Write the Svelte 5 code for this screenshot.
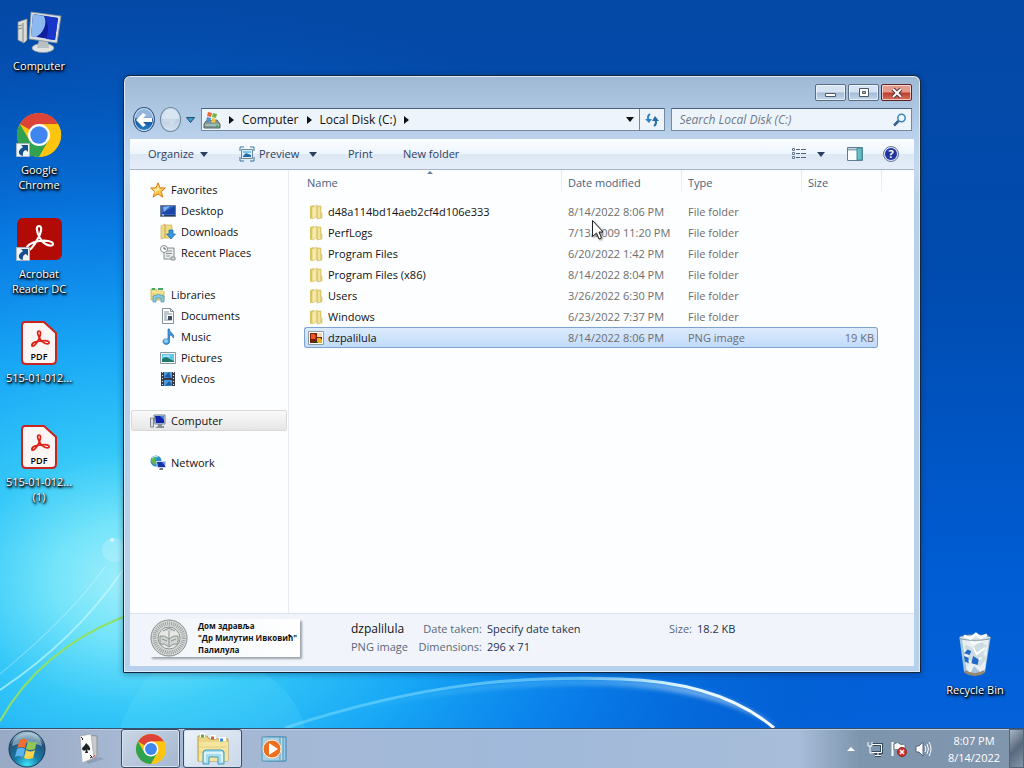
<script>
	let search = '';
	let selected = 'dzpalilula';

	const shortcuts = [
		{ icon: 'computer', label: 'Computer' },
		{ icon: 'chrome', label: 'Google Chrome', link: true },
		{ icon: 'acrobat', label: 'Acrobat Reader DC', link: true },
		{ icon: 'pdf', label: '515-01-012...' },
		{ icon: 'pdf', label: '515-01-012... (1)' }
	];

	const groups = [
		{
			icon: 'star',
			label: 'Favorites',
			items: [
				{ icon: 'desktop', label: 'Desktop' },
				{ icon: 'downloads', label: 'Downloads' },
				{ icon: 'recent', label: 'Recent Places' }
			]
		},
		{
			icon: 'libraries',
			label: 'Libraries',
			items: [
				{ icon: 'documents', label: 'Documents' },
				{ icon: 'music', label: 'Music' },
				{ icon: 'pictures', label: 'Pictures' },
				{ icon: 'videos', label: 'Videos' }
			]
		},
		{ icon: 'pc', label: 'Computer', active: true, items: [] },
		{ icon: 'network', label: 'Network', items: [] }
	];

	const files = [
		{ name: 'd48a114bd14aeb2cf4d106e333', date: '8/14/2022 8:06 PM', type: 'File folder', size: '' },
		{ name: 'PerfLogs', date: '7/13/2009 11:20 PM', type: 'File folder', size: '' },
		{ name: 'Program Files', date: '6/20/2022 1:42 PM', type: 'File folder', size: '' },
		{ name: 'Program Files (x86)', date: '8/14/2022 8:04 PM', type: 'File folder', size: '' },
		{ name: 'Users', date: '3/26/2022 6:30 PM', type: 'File folder', size: '' },
		{ name: 'Windows', date: '6/23/2022 7:37 PM', type: 'File folder', size: '' },
		{ name: 'dzpalilula', date: '8/14/2022 8:06 PM', type: 'PNG image', size: '19 KB' }
	];
</script>

{#snippet chrome()}
	<svg class="chrome" viewBox="0 0 48 48" aria-hidden="true">
		<circle cx="24" cy="24" r="24" fill="#fdc50f" />
		<path d="M24 24 3.2 12A24 24 0 0 1 44.8 12H24Z" fill="#dd4336" />
		<path d="M3.2 12A24 24 0 0 0 24 48L34.4 30 24 24 13.6 30Z" fill="#2fa14f" />
		<path d="M44.8 12H24L34.4 30 24 48A24 24 0 0 0 44.8 12Z" fill="#fdc50f" />
		<circle cx="24" cy="24" r="12" fill="#fff" />
		<circle cx="24" cy="24" r="9.5" fill="#3f86ee" />
	</svg>
{/snippet}

{#snippet down()}
	<svg class="tri" viewBox="0 0 8 5" aria-hidden="true"><path d="M0 0h8L4 5Z" fill="currentColor" /></svg>
{/snippet}

{#snippet right()}
	<svg class="tri-right" viewBox="0 0 5 8" aria-hidden="true"><path d="M0 0v8l5-4Z" fill="#111" /></svg>
{/snippet}

{#snippet bigIcon(name)}
	{#if name === 'computer'}
		<svg class="big" viewBox="0 0 44 44" aria-hidden="true">
			<path d="m1 13 9-3v21l-3 3-6-3Z" fill="#d9dcda" stroke="#8d9692" stroke-width=".7" />
			<path d="M6 14v19M1 17l4-1M1 20l4-1" stroke="#7d8581" />
			<ellipse cx="26" cy="39" rx="11" ry="4.500" fill="#dfe3e2" stroke="#8e9898" stroke-width=".7" />
			<path d="m22 31 9 1 1 7H20Z" fill="#b9c1c2" />
			<path d="m14 3 30 4-4 27-28-4Z" fill="#d8dee0" stroke="#7d8b97" stroke-width=".8" />
			<path d="m16 5 25 4-3 22-24-4Z" fill="#101f9b" />
			<path d="m16 5 11 2c4 8-1 17-8 21l-5-1Z" fill="#8cbaf0" />
			<path d="m27 7 14 2-3 22-9-1c3-7 3-15-2-23Z" fill="#1735c8" />
		</svg>
	{:else if name === 'chrome'}
		{@render chrome()}
	{:else if name === 'acrobat'}
		<svg class="big" viewBox="0 0 44 44" aria-hidden="true">
			<rect y="1" width="45" height="42" rx="6" fill="#b20b05" />
			<path d="M10 33c-2-4 5-8 12-9 6-1 14 0 14 3s-9 2-13-6c-4-7-4-12-1-12 4 0 2 8-2 14-3 6-8 12-10 10Z" fill="none" stroke="#fff" stroke-width="2.200" />
		</svg>
	{:else if name === 'pdf'}
		<svg class="big" viewBox="0 0 44 44" aria-hidden="true">
			<path d="M8 1h19l12 11v27q0 4-4 4H9q-4 0-4-4V5q0-4 3-4Z" fill="#fbf5f3" stroke="#ca2420" stroke-width="2" />
			<path d="M15 25c-1-3 4-5 9-5 4-1 9 0 8 2s-7 0-9-4c-3-5-3-8-1-8 3 0 1 6-1 10-2 3-4 6-6 5Z" fill="none" stroke="#df2018" stroke-width="1.700" />
			<text x="22" y="39" text-anchor="middle" class="pdf-text">PDF</text>
		</svg>
	{:else}
		<svg class="big bin" viewBox="0 0 44 48" aria-hidden="true">
			<path d="m5 5 5 37q12 8 23 0l6-37Z" fill="#b9cfdd" opacity=".9" />
			<path d="m8 8 5 32 4 4 4-8 8 8 4-5 4-31-10-4-9 2-8-2Z" fill="#e9f0f2" />
			<path d="m11 12 9 5 6-9 9 6-4 9 4 5-8 9-5-8-9 7 2-12-4-7Z" fill="#cbdce3" />
			<path d="m20 16 4 7 9-7M12 28l7 5 10-6M17 9l4 3 8-3" fill="none" stroke="#fff" stroke-width="2" />
			<ellipse cx="22" cy="5" rx="17" ry="3" fill="#d9e5e9" stroke="#8195a3" />
			<path d="m10 3 7 3 6-5 5 4 7-3" fill="none" stroke="#fff" stroke-width="3" />
			<path d="m10 22 4-4 4 2-2 4Zm8 11 2-8 6 4-1 6Zm-7-2-1-6 5 2v6Z" fill="#2469c6" />
			<path d="M11 42q11 7 21 0" fill="none" stroke="#97866d" stroke-width="3" />
		</svg>
	{/if}
{/snippet}

{#snippet icon(name)}
	<svg class="small" viewBox="0 0 16 16" aria-hidden="true">
		{#if name === 'star'}
			<path d="m8 .8 2 5 5.300.2-4 3.600 1.500 5.500L8 12l-4.800 3.100L4.700 9.600.7 6 6 5.800Z" fill="#ffc54b" stroke="#d97b16" />
			<path d="m8 3 1 4 3 .5-5 1.500-3 3 1-3-2-2 4-.5Z" fill="#ffed9c" />
		{:else if name === 'desktop'}
			<path d="M.5 2.500h15v11H.5Z" fill="#3268c6" stroke="#6d7c8e" />
			<path d="m1 11 5-3 9-5v8H1Z" fill="#1b45a5" /><path d="m3 4 7-1-6 6Z" fill="#7eb1ed" />
			<path d="M1 12.500h14" stroke="#263a5c" /><path d="M2 12h2" stroke="#fff" />
		{:else if name === 'downloads'}
			<path d="m1 2 4-2v14l-4 1Zm4-1h7v13H5Z" fill="#eddb86" stroke="#caaa43" stroke-width=".6" />
			<path d="M9 6h4v4h2.500L11 15 6.500 10H9Z" fill="#3696df" stroke="#1767a6" stroke-width=".7" />
		{:else if name === 'recent'}
			<path d="M5 3h9v11H4V8" fill="#eceeed" stroke="#828b8b" />
			<path d="M6 6h6M6 8.500h6M6 11h4M11 12h4v3h-4Z" stroke="#8a9393" fill="#ced4d4" />
			<circle cx="4" cy="4" r="3.500" fill="#fff" stroke="#8b9191" /><path d="M4 2v2h2" stroke="#555" fill="none" />
		{:else if name === 'libraries'}
			<path d="M1 2h5l1 2h7v9H1Z" fill="#edd978" stroke="#c4a640" stroke-width=".7" />
			<path d="M2 2h3M8 2h5" stroke="#49a768" stroke-width="2" /><path d="M2 5h12" stroke="#fff3b0" />
			<path d="M3 15V9q5-3 11 0v6h-3v-4H6v4Z" fill="#86cbe5" stroke="#4196bb" stroke-width=".7" />
		{:else if name === 'documents'}
			<path d="M2.500.5h8l3 3v12h-11Z" fill="#fff" stroke="#849097" />
			<path d="M10.500.5v3h3M4 4h5M4 6h8M4 8h3M4 10h3M4 12h8" fill="none" stroke="#7e8d98" /><path d="M8 8h4v4H8Z" fill="#3b4b63" />
		{:else if name === 'music'}
			<path d="M8 0h1.500c0 4 5 4 4 9-1-2-3-3-4-3v7c0 2-3 3-5 2s-2-4 0-5H8Z" fill="#4398d7" stroke="#2367a6" stroke-width=".7" />
			<circle cx="6" cy="12" r="2" fill="#88cff3" />
		{:else if name === 'pictures'}
			<path d="M.5 2.500h15v11H.5Z" fill="#f2f6f7" stroke="#89969d" />
			<path d="M2 4h12v8H2Z" fill="#63c4e6" /><path d="m2 9 4-2 8 4v1H2Z" fill="#20776b" /><path d="M3 6h7" stroke="#dffbff" />
		{:else if name === 'videos'}
			<path d="M1 1h14v14H1Z" fill="#353a45" /><path d="M4 1h8v6H4Zm0 8h8v6H4Z" fill="#4b9cda" />
			<path d="m4 6 5-5 2 6Zm1 9 4-5 3 4Z" fill="#225aa0" />
			<path d="M2.500 1v14M13.500 1v14" stroke="#eee" stroke-dasharray="1 2" />
		{:else if name === 'pc'}
			<path d="M.5 5h3v9h-3Z" fill="#d9dddf" stroke="#7e8990" /><path d="M4 2h11v9H5Z" fill="#cdd9e6" stroke="#6f7f98" />
			<path d="M5 3h9v7H6Z" fill="#1322ab" /><path d="M10 3h4v4Z" fill="#4b83e0" /><path d="M8 11h4v2h2v2H5l3-2Z" fill="#858f98" />
		{:else if name === 'network'}
			<circle cx="6" cy="6" r="5.500" fill="#268ed1" /><path d="m2 3 5-1-2 4 2 3-3 1-3-4Z" fill="#69b74b" /><path d="M2 3q3-3 6-1" stroke="#c8f3ff" fill="none" />
			<path d="M6 6h10v7H7Z" fill="#cad7e5" /><path d="M7 7h8v5H8Z" fill="#1633aa" /><path d="M12 7h3v4Z" fill="#5b94e8" /><path d="M10 13h3v2H9Z" fill="#707c88" />
		{:else if name === 'folder'}
			<path d="m2 2 4-1v13l-4 1Z" fill="#d9c663" /><path d="m4 3 5-2v12l-5 2Z" fill="#f3e5a0" stroke="#d5bd63" stroke-width=".5" />
			<path d="M9 2h4v6l1 1v5l-5 1Z" fill="#e4d17b" stroke="#c9b44f" stroke-width=".5" /><path d="M6 4v9M11 3v11" stroke="#fff4bc" />
		{:else if name === 'image'}
			<path d="M.5 1.500h15v13H.5Z" fill="#fff" stroke="#949b9d" /><path d="M2 3h12v10H2Z" fill="#7a2010" />
			<path d="M3 4h3q3 1 1 5H3Z" fill="#f2591b" /><path d="M9 8q4-1 5 2v3H9Z" fill="#efac20" /><path d="m7 9 3 4H6Z" fill="#244716" /><path d="M9 3h5v4H9Z" fill="#f3d9a8" />
		{/if}
	</svg>
{/snippet}

<div class="desktop">
	<svg class="wallpaper" viewBox="0 0 1024 768" preserveAspectRatio="none" aria-hidden="true">
		<defs>
			<linearGradient id="sky" x2="0" y2="1">
				<stop offset="0" stop-color="#0549a6" /><stop offset=".35" stop-color="#004bae" />
				<stop offset=".75" stop-color="#005dd4" /><stop offset="1" stop-color="#0562da" />
			</linearGradient>
			<radialGradient id="glow" cx="0" cy="0" r="1" gradientUnits="userSpaceOnUse" gradientTransform="translate(130 580) scale(760 580)">
				<stop offset="0" stop-color="#a1effa" /><stop offset=".1" stop-color="#74e4fa" />
				<stop offset=".22" stop-color="#35c8f8" /><stop offset=".4" stop-color="#18a8f6" />
				<stop offset=".62" stop-color="#0a84ee" stop-opacity=".8" /><stop offset="1" stop-color="#0059c5" stop-opacity="0" />
			</radialGradient>
			<linearGradient id="arc" x1="270" x2="778" y1="0" y2="0" gradientUnits="userSpaceOnUse">
				<stop offset="0" stop-color="#8ee5ff" stop-opacity=".4" /><stop offset=".6" stop-color="#8fe0ff" stop-opacity=".6" />
				<stop offset=".8" stop-color="#d8f4ff" /><stop offset="1" stop-color="#fff" />
			</linearGradient>
			<filter id="haze"><feGaussianBlur stdDeviation="2" /></filter>
		</defs>
		<path d="M0 0h1024v768H0Z" fill="url(#sky)" />
		<path d="M0 0h1024v768H0Z" fill="url(#glow)" />
		<path d="M120 728q35-95 110-70 62 20 75 70Z" fill="#80f5ff" opacity=".12" />
		<path d="M270 728C420 690 520 676 610 679q110 2 168 49-62-38-168-42-160-4-340 42" fill="url(#arc)" opacity=".45" filter="url(#haze)" />
		<path d="M285 728C430 680 530 676 620 679q100 3 154 49" fill="none" stroke="url(#arc)" stroke-width="3" />
		<path d="M0 690Q75 640 123 570" fill="none" stroke="#c7faff" stroke-width="2" opacity=".65" />
		<path d="M0 674Q70 616 105 567" fill="none" stroke="#fff" opacity=".4" />
		<path d="M0 721q40-71 123-104" fill="none" stroke="#8fe06a" stroke-width="2" />
		<circle cx="114" cy="550" r="12" fill="#fff" opacity=".18" /><circle cx="112" cy="540" r="2" fill="#fff" opacity=".6" />
	</svg>

	<main class="workspace">
		<div class="shortcuts">
			{#each shortcuts as item}
				<button class="shortcut">
					<span class="picture">
						{@render bigIcon(item.icon)}
						{#if item.link}
							<svg class="arrow" viewBox="0 0 14 14" aria-hidden="true">
								<path d="M.5.5h13v13H.5Z" fill="#eef3f7" stroke="#a9b7c2" />
								<path d="M5 2h7v7l-2-2q-4 1-3 6-5-1-4-5 1-2 4-4Z" fill="#174f8b" />
							</svg>
						{/if}
					</span>
					<span class="caption">{item.label}</span>
				</button>
			{/each}
		</div>

		<section class="window" aria-label="Local Disk (C:)">
			<header class="titlebar">
				<button class="caption-button" aria-label="Minimize">
					<svg viewBox="0 0 14 10"><path d="M1.500 5.500h10v3h-10Z" fill="#fff" stroke="#4c5664" /></svg>
				</button>
				<button class="caption-button" aria-label="Maximize">
					<svg viewBox="0 0 14 10"><path d="M2.500.5h9v8h-9Z" fill="#fff" stroke="#4c5664" /><path d="M5.500 3.500h3v2h-3Z" fill="#b7c9df" stroke="#4c5664" /></svg>
				</button>
				<button class="caption-button close" aria-label="Close">
					<svg viewBox="0 0 14 10"><path d="m3 1 8 8m0-8L3 9" stroke="#553439" stroke-width="4" /><path d="m3 1 8 8m0-8L3 9" stroke="#fff" stroke-width="2" /></svg>
				</button>
			</header>

			<div class="navigation">
				<div class="history">
					<button class="round back" aria-label="Back">
						<svg viewBox="0 0 18 18"><path d="m8 2 3 2-3 3h9v4H8l3 3-3 2-7-7Z" fill="#fff" /></svg>
					</button>
					<button class="round forward" aria-label="Forward">
						<svg viewBox="0 0 18 18"><path d="m10 3-2 2 2 2H2v4h8l-2 2 2 2 6-6Z" fill="#dce7f2" opacity=".5" /></svg>
					</button>
					<button class="recent" aria-label="Recent pages">
						<svg viewBox="0 0 9 6"><path d="M.5.5h8l-4 5Z" fill="#3b9dcd" stroke="#234a70" /></svg>
					</button>
				</div>
				<nav class="address" aria-label="Address">
					<svg class="drive" viewBox="0 0 18 18" aria-hidden="true">
						<path d="m3 10 11-1 3 4v4H1v-4Z" fill="#819897" stroke="#546965" />
						<path d="M2 14h14" stroke="#c4dcda" /><path d="M13 15h2" stroke="#43b44c" stroke-width="2" />
						<path d="m5 1 4 1-1 4-4-1Z" fill="#e86838" /><path d="m10 2 4 1-1 4-4-1Z" fill="#75b747" />
						<path d="m4 6 4 1-1 4-4-1Z" fill="#4a95d5" /><path d="m9 7 4 1-1 4-4-1Z" fill="#f2c141" />
					</svg>
					{@render right()}
					<button class="crumb">Computer</button>
					{@render right()}
					<button class="crumb">Local Disk (C:)</button>
					{@render right()}
					<button class="history-button" aria-label="Previous locations">{@render down()}</button>
					<button class="refresh" aria-label="Refresh">
						<svg viewBox="0 0 16 16"><path d="M6 2q-3 2-1.500 6" fill="none" stroke="#3383c4" stroke-width="2" /><path d="M1 7h7l-3 4Z" fill="#3383c4" /><path d="M10 14q3-2 1.500-6" fill="none" stroke="#246da9" stroke-width="2" /><path d="M8 9h7l-4-5Z" fill="#246da9" /></svg>
					</button>
				</nav>
				<label class="search">
					<input type="text" bind:value={search} placeholder="Search Local Disk (C:)" aria-label="Search Local Disk (C:)" />
					<svg viewBox="0 0 14 14" aria-hidden="true"><circle cx="8.500" cy="5" r="3.700" fill="#e8f8ff" stroke="#4283b5" stroke-width="1.500" /><path d="M5.500 8 1 12.500" stroke="#315f92" stroke-width="2.500" /></svg>
				</label>
			</div>

			<div class="toolbar">
				<button class="organize">Organize {@render down()}</button>
				<button class="preview">
					<svg class="small" viewBox="0 0 16 16" aria-hidden="true"><path d="M1 5V1h4m6 0h4v4M1 11v4h4m6 0h4v-4" fill="none" stroke="#35779d" /><path d="M2.500 3.500h11v9h-11Z" fill="#dceffa" stroke="#718793" /><path d="m4 10 3-3 5 2v2H4Z" fill="#236ba7" /><path d="M4 5h8v2H4Z" fill="#7bc7eb" /></svg>
					Preview
				</button>
				<button class="preview-menu" aria-label="Preview options">{@render down()}</button>
				<button class="print">Print</button>
				<button class="new-folder">New folder</button>
				<div class="tools">
					<button class="view" aria-label="Change your view">
						<svg class="small" viewBox="0 0 16 14"><path d="M1.500 1.500h2v2h-2Zm0 4h2v2h-2Zm0 4h2v2h-2Z" fill="#fff" stroke="#65758b" /><path d="M5 2.500h4m1 0h5M5 6.500h4m1 0h5M5 10.500h4m1 0h5" stroke="#52627a" /></svg>
						{@render down()}
					</button>
					<button aria-label="Show the preview pane">
						<svg class="small" viewBox="0 0 16 14"><path d="M.5.500h15v13H.5Z" fill="#fbfdfe" stroke="#627d91" /><path d="M1 2.500h9" stroke="#8baab9" stroke-width="2" /><path d="M10 1h5v12h-5Z" fill="#64bec2" stroke="#3c8c9d" /></svg>
					</button>
					<button aria-label="Get help">
						<svg class="small" viewBox="0 0 16 16"><circle cx="8" cy="8" r="7.500" fill="#dbe6f5" stroke="#6878a5" /><circle cx="8" cy="8" r="6" fill="#25349c" /><text x="8" y="12" class="help-text" text-anchor="middle">?</text></svg>
					</button>
				</div>
			</div>

			<div class="content">
				<nav class="sidebar" aria-label="Folders">
					{#each groups as group}
						<div class="group">
							<button class="place" class:active={group.active}>{@render icon(group.icon)}{group.label}</button>
							{#each group.items as item}
								<button class="place child">{@render icon(item.icon)}{item.label}</button>
							{/each}
						</div>
					{/each}
				</nav>
				<div class="listing">
					<table>
						<thead>
							<tr>
								<th class="name">Name<svg class="sorted" viewBox="0 0 8 4" aria-hidden="true"><path d="m0 4 4-4 4 4Z" fill="#66809a" /></svg></th>
								<th class="date">Date modified</th>
								<th class="type">Type</th>
								<th class="size">Size</th>
								<th class="end"></th>
							</tr>
						</thead>
						<tbody>
							{#each files as file}
								<tr class:selected={file.name === selected} onclick={() => (selected = file.name)}>
									<td class="name"><span>{@render icon(file.size ? 'image' : 'folder')}{file.name}</span></td>
									<td>{file.date}</td>
									<td>{file.type}</td>
									<td class="size">{file.size}</td>
								</tr>
							{/each}
						</tbody>
					</table>
				</div>
			</div>

			<footer class="details">
				<div class="thumbnail">
					<svg viewBox="0 0 38 38" aria-hidden="true">
						<circle cx="19" cy="19" r="18" fill="#d8dcda" stroke="#868d8a" />
						<circle cx="19" cy="19" r="14.500" fill="none" stroke="#9ba29e" stroke-width="4" stroke-dasharray="1 1" />
						<circle cx="19" cy="19" r="11" fill="#e6e8e6" stroke="#8b9390" />
						<path d="M10 17q5-1 9 3 4-4 9-3v8q-5-1-9 3-4-4-9-3Zm3-5 6-3 6 3m-6 0v15M12 20l5 2m4 0 5-2" fill="#d0d5d2" stroke="#8b9390" />
					</svg>
					<p>Дом здравља<br />"Др Милутин Ивковић"<br />Палилула</p>
				</div>
				<dl>
					<dt class="file-name">dzpalilula</dt>
					<dt>Date taken:</dt><dd>Specify date taken</dd>
					<dt>Size:</dt><dd>18.2 KB</dd>
					<dt class="file-type">PNG image</dt>
					<dt>Dimensions:</dt><dd>296 x 71</dd>
				</dl>
			</footer>
		</section>

		<button class="shortcut recycle">
			<span class="picture">{@render bigIcon('bin')}</span>
			<span class="caption">Recycle Bin</span>
		</button>

		<svg class="cursor" viewBox="0 0 12 20" aria-hidden="true"><path d="M.5.500v16l4-3.500 2.500 6 2.500-1-2.500-6H11Z" fill="#fff" stroke="#222" /></svg>
	</main>

	<footer class="taskbar">
		<button class="start" aria-label="Start">
			<svg viewBox="0 0 38 38">
				<defs><radialGradient id="orb" cx=".5" cy=".95" r=".9"><stop offset="0" stop-color="#3de5f8" /><stop offset=".4" stop-color="#1878a5" /><stop offset=".8" stop-color="#255478" /><stop offset="1" stop-color="#9ebac9" /></radialGradient></defs>
				<circle cx="19" cy="19" r="18" fill="url(#orb)" stroke="#153a58" />
				<path d="M4 16Q6 4 19 3t15 13Q19 9 4 16Z" fill="#c8dfeb" opacity=".5" />
				<path d="M12 10q4-3 7 0l-2 8q-4-2-8 0Z" fill="#ef6d30" /><path d="M20 11q5 3 9 0l-2 8q-5 2-9 0Z" fill="#94c653" />
				<path d="M9 19q4-3 8 0l-2 8q-4-2-8 0Z" fill="#5bb3ef" /><path d="M18 20q4 3 9 0l-2 8q-5 2-9 0Z" fill="#ffd44d" />
			</svg>
		</button>
		<button class="task" aria-label="Solitaire">
			<svg viewBox="0 0 34 34"><path d="m12 28 16-3 4 2-15 5Z" fill="#63748b" opacity=".3" /><path d="m12 3 13 1v20l-9 6Z" fill="#c9c9cb" stroke="#777e89" stroke-width=".7" /><path d="m8 4 11-2 3 24-12 5Z" fill="#fafafa" stroke="#9ca3aa" stroke-width=".7" /><path d="M14 11q5 4 4 7-2 1-3-1l1 4h-3l1-3q-3 2-4-1c0-2 3-3 4-6Z" fill="#202426" /><path d="m9 5 2 2-1 1m8 15 2 2-2 1" fill="none" stroke="#222" /><path d="m20 26 3-3" stroke="#b55" /></svg>
		</button>
		<button class="task running" aria-label="Google Chrome">{@render chrome()}</button>
		<button class="task running front" aria-label="Windows Explorer">
			<svg viewBox="0 0 34 34"><path d="M2 4h9l2 3h19v22H2Z" fill="#ead684" stroke="#b99e48" /><path d="M4 3h5m5 2h6m3 2h7" stroke="#fff" stroke-width="4" /><path d="M5 4h3" stroke="#49ad53" stroke-width="3" /><path d="M15 6h3" stroke="#d7593c" stroke-width="3" /><path d="M24 8h3" stroke="#3c8bd7" stroke-width="3" /><path d="M3 10h29v19H3Z" fill="#f4e69e" /><path d="M3 15h28m-28 5h28" stroke="#e4cf7e" /><path d="M7 32V21q0-3 3-3h15q3 0 3 3v11h-6v-7h-9v7Z" fill="#a9dced" stroke="#439cbd" /><path d="M9 30v-9h17v9" fill="none" stroke="#e3fbff" stroke-width="1.500" /></svg>
		</button>
		<button class="task" aria-label="Windows Media Player">
			<svg viewBox="0 0 34 34"><path d="M11 5h18v24H11Z" fill="#9ccce6" stroke="#3d82a9" /><path d="M8 5h18v24H8Z" fill="#b9ddec" stroke="#4c92b5" /><path d="M5 5h18v24H5Z" fill="#a9cfe3" stroke="#5a99b8" /><circle cx="15" cy="17" r="9" fill="#ed701f" stroke="#fff1dd" /><path d="m12 11 9 6-9 6Z" fill="#fff" /></svg>
		</button>
		<div class="tray">
			<button aria-label="Show hidden icons"><svg class="tray-up" viewBox="0 0 8 4"><path d="m0 4 4-4 4 4Z" fill="#fff" /></svg></button>
			<button aria-label="Network"><svg class="small" viewBox="0 0 16 16"><path d="M5 3.500h9.500v8H5M8 14.500h6m-3-3v3" fill="none" stroke="#344b60" stroke-width="3" /><path d="M5 3.500h9.500v8H5M8 14.500h6m-3-3v3M1 1v4h4V1M3 5v7h4" fill="none" stroke="#fff" /></svg></button>
			<button aria-label="Action Center"><svg class="small" viewBox="0 0 16 16"><path d="M1.500 1v14" stroke="#fff" stroke-width="2" /><path d="M3 3q4-3 6 0 2 1 5 0v7q-4 1-6-1-2-1-5 0Z" fill="#fff" stroke="#68798b" /><circle cx="11" cy="11" r="4.500" fill="#d7332d" stroke="#8b2424" /><path d="m9 9 4 4m0-4-4 4" stroke="#fff" stroke-width="1.500" /></svg></button>
			<button aria-label="Volume"><svg class="small" viewBox="0 0 16 16"><path d="M1 5h3l4-4v14l-4-4H1Z" fill="#fff" stroke="#526579" /><path d="M10 5q2 3 0 6m2-8q3 5 0 10m2-12q4 7 0 14" fill="none" stroke="#fff" /></svg></button>
			<button class="clock"><time datetime="2022-08-14T20:07">8:07 PM<br />8/14/2022</time></button>
			<button class="show-desktop" aria-label="Show desktop"></button>
		</div>
	</footer>
</div>

<style>
	:global(body) {
		overflow: hidden;
	}

	.desktop,
	.desktop * {
		box-sizing: border-box;
	}

	.desktop {
		position: relative;
		display: flex;
		flex-direction: column;
		height: 100vh;
		font: 11px/16px 'Open Sans', 'Noto Sans', sans-serif;
		color: #111;
	}

	button {
		display: flex;
		align-items: center;
		padding: 0;
		border: 0;
		background: none;
		font: inherit;
		color: inherit;
		white-space: nowrap;
	}

	svg {
		display: block;
		flex: none;
		overflow: visible;
	}

	.wallpaper {
		position: absolute;
		width: 100%;
		height: 100%;
	}

	.workspace {
		position: relative;
		display: flex;
		flex: 1;
		justify-content: space-between;
		min-height: 0;
	}

	.small {
		width: 16px;
		height: 16px;
	}

	.tri {
		width: 8px;
		height: 5px;
	}

	.tri-right {
		width: 5px;
		height: 8px;
	}

	/* desktop icons */
	.shortcuts {
		padding-top: 9px;
	}

	.shortcut {
		flex-direction: column;
		gap: 5px;
		width: 78px;
		height: 104px;
		line-height: 15px;
		color: #fff;
		text-shadow: 0 1px 2px #000, 1px 1px 2px #000, 1px 2px 3px #000;
	}

	.shortcut .caption {
		width: 72px;
		white-space: normal;
	}

	.picture {
		position: relative;
		width: 44px;
		height: 44px;
	}

	.big,
	.picture .chrome {
		width: 44px;
		height: 44px;
	}

	.arrow {
		position: absolute;
		left: -1px;
		bottom: 0;
		width: 14px;
		height: 14px;
	}

	.pdf-text {
		font: 600 9px 'Open Sans', sans-serif;
		text-shadow: none;
	}

	.recycle {
		align-self: flex-end;
		height: 95px;
		margin-right: 10px;
	}

	/* explorer window */
	.window {
		position: absolute;
		inset: 75px 103px 55px 123px;
		display: flex;
		flex-direction: column;
		padding: 0 6px 6px;
		border: 1px solid #14283c;
		border-radius: 7px 7px 1px 1px;
		background: linear-gradient(#9fb9d5, #b9d1eb 60px, #c4d9ee 92px, #b7d0eb 120px);
		box-shadow: inset 0 0 0 1px #dcebf8, 0 1px 6px rgba(0, 25, 70, 0.4);
	}

	.titlebar {
		display: flex;
		justify-content: flex-end;
		gap: 2px;
		height: 30px;
		padding: 8px 2px 0 0;
	}

	.caption-button {
		justify-content: center;
		width: 31px;
		height: 17px;
		border: 1px solid #586e88;
		border-radius: 2px;
		background: linear-gradient(#d5e3f2 48%, #a3bbd6 52%, #c4d8ec);
		box-shadow: inset 0 0 0 1px rgba(255, 255, 255, 0.6);
	}

	.caption-button svg {
		width: 14px;
		height: 10px;
	}

	.caption-button.close {
		border-color: #5e2228;
		background: linear-gradient(#e69c8d 48%, #b93b29 52%, #d77461);
	}

	.navigation {
		display: flex;
		gap: 6px;
		height: 33px;
		padding: 2px 2px 8px 3px;
	}

	.history {
		display: flex;
		align-items: center;
		gap: 5px;
		width: 62px;
	}

	.round {
		justify-content: center;
		width: 25px;
		height: 25px;
		border: 1px solid #34597d;
		border-radius: 50%;
		box-shadow: inset 0 0 0 1px #c8dff2;
	}

	.back {
		background: linear-gradient(#94b6dd 40%, #164d9c 50%, #2686cf);
	}

	.forward {
		border-color: #72869b;
		background: linear-gradient(#d8e5f2 45%, #b9cade 50%, #d7e6f4);
	}

	.round svg {
		width: 18px;
		height: 18px;
	}

	.recent svg {
		width: 9px;
		height: 6px;
	}

	.address,
	.search {
		display: flex;
		align-items: center;
		height: 23px;
		border: 1px solid #7589a2;
		border-top-color: #47607e;
		background: #edf4fc;
	}

	.address {
		flex: 1;
		gap: 8px;
		font-size: 12px;
	}

	.drive {
		width: 18px;
		height: 18px;
		margin-left: 1px;
	}

	.history-button {
		margin-left: auto;
		color: #111;
	}

	.refresh {
		justify-content: center;
		align-self: stretch;
		margin-left: -3px;
		width: 25px;
		border-left: 1px solid #7589a2;
	}

	.refresh svg {
		width: 16px;
		height: 16px;
	}

	.search {
		width: 31%;
		padding: 0 4px 0 8px;
	}

	.search input {
		flex: 1;
		min-width: 0;
		padding: 0;
		border: 0;
		outline: 0;
		background: none;
		font: 12px/18px 'Open Sans', sans-serif;
	}

	.search input::placeholder {
		font-style: italic;
		color: #707985;
	}

	.search svg {
		width: 14px;
		height: 14px;
	}

	.toolbar {
		display: flex;
		align-items: center;
		height: 31px;
		padding: 0 15px 0 18px;
		border-bottom: 1px solid #a6b5ca;
		background: linear-gradient(#fcfeff, #edf5fd 49%, #dee8f5 50%, #e4edf9);
		color: #2c3f60;
	}

	.organize {
		gap: 6px;
		width: 91px;
	}

	.preview {
		gap: 4px;
		width: 70px;
	}

	.preview-menu {
		width: 39px;
	}

	.print {
		width: 55px;
	}

	.tools {
		display: flex;
		gap: 20px;
		margin-left: auto;
	}

	.view {
		gap: 10px;
		padding-right: 2px;
	}

	.help-text {
		font: 700 11px 'Open Sans', sans-serif;
		fill: #fff;
	}

	.content {
		display: flex;
		flex: 1;
		min-height: 0;
		background: #fdfeff;
	}

	.sidebar {
		width: 159px;
		padding: 9px 1px;
		border-right: 1px solid #e6edf5;
	}

	.group {
		margin-bottom: 21px;
	}

	.place {
		gap: 5px;
		width: 100%;
		height: 21px;
		padding-left: 18px;
		border: 1px solid transparent;
	}

	.child {
		padding-left: 28px;
	}

	.place.active {
		border-color: #d9d9d9;
		border-radius: 2px;
		background: linear-gradient(#fafafa, #e6e6e6);
	}

	.listing {
		flex: 1;
		padding-left: 15px;
	}

	table {
		border-spacing: 0;
		table-layout: fixed;
		width: 578px;
		color: #6d6d6d;
	}

	th {
		height: 31px;
		padding: 5px 7px 0;
		background: linear-gradient(#e0e8f0, #eef3f8) left top / 1px 23px no-repeat;
		font-weight: 400;
		text-align: left;
		vertical-align: top;
		color: #4c607a;
	}

	th.name {
		position: relative;
		width: 257px;
		padding-left: 3px;
		background: none;
	}

	th.date,
	th.type {
		width: 120px;
	}

	th.size {
		width: 77px;
	}

	th.end {
		width: 4px;
		padding: 0;
		background-position: right top;
	}

	.sorted {
		position: absolute;
		top: 1px;
		left: 48%;
		width: 6px;
		height: 3px;
	}

	td {
		height: 21px;
		padding: 0 7px;
		border: solid transparent;
		border-width: 1px 0;
		line-height: 19px;
	}

	td.name {
		padding-left: 4px;
		color: #111;
	}

	td.name span {
		display: flex;
		align-items: center;
		gap: 4px;
	}

	td.size {
		padding-right: 4px;
		text-align: right;
	}

	.selected td {
		border-color: #7da2ce;
		background: linear-gradient(#dcebfc, #c1dbfc) padding-box;
	}

	.selected td:first-child {
		padding-left: 3px;
		border-left: 1px solid #7da2ce;
		border-radius: 3px 0 0 3px;
	}

	.selected td:last-child {
		padding-right: 3px;
		border-right: 1px solid #7da2ce;
		border-radius: 0 3px 3px 0;
	}

	.details {
		display: flex;
		gap: 51px;
		padding: 5px 20px 9px;
		border-top: 1px solid #d9e2ee;
		background: #f1f5fb;
	}

	.thumbnail {
		display: flex;
		align-items: center;
		gap: 10px;
		width: 150px;
		height: 38px;
		background: linear-gradient(90deg, #f1f5fb, #fff);
		box-shadow: 2px 2px 2px #9aa1aa;
		font: 700 8px/12px 'Open Sans', sans-serif;
	}

	.thumbnail svg {
		width: 38px;
		height: 38px;
	}

	.thumbnail p {
		margin: 0;
		white-space: nowrap;
	}

	dl {
		display: grid;
		grid-template-columns: 60px 66px 150px 50px auto;
		grid-auto-rows: 18px;
		column-gap: 5px;
		margin: 1px 0 0;
		line-height: 18px;
		white-space: nowrap;
		color: #24324d;
	}

	dt {
		text-align: right;
		color: #5a6779;
	}

	dd {
		margin: 0;
	}

	.file-name,
	.file-type {
		text-align: left;
	}

	.file-name {
		font-size: 12px;
		color: #111;
	}

	.cursor {
		position: absolute;
		left: 592px;
		top: 220px;
		width: 12px;
		height: 20px;
		filter: drop-shadow(1px 1px 1px #888);
	}

	/* taskbar */
	.taskbar {
		position: relative;
		display: flex;
		gap: 3px;
		height: 40px;
		padding-left: 8px;
		border-top: 1px solid #34516f;
		background: linear-gradient(90deg, #97a9c4, #a6b8d2 12%, #a1b9da 50%, #a7bdd9 78%, #7e95ae 84%, #8096ad);
		box-shadow: inset 0 1px 0 #b9cce1;
	}

	.start {
		width: 49px;
	}

	.start svg {
		width: 38px;
		height: 38px;
	}

	.task {
		justify-content: center;
		width: 58px;
		border: 1px solid transparent;
	}

	.task svg {
		width: 34px;
		height: 34px;
	}

	.task .chrome {
		width: 30px;
		height: 30px;
	}

	.task.running {
		width: 59px;
		border-color: #394d65;
		border-radius: 3px;
		background: linear-gradient(135deg, #cad6e6, #a4b7d0);
		box-shadow: inset 0 0 0 1px #d7e3f0;
	}

	.task.running.front {
		background: linear-gradient(135deg, #edf3f9, #c8d7e8);
	}

	.tray {
		display: flex;
		align-items: center;
		gap: 8px;
		margin-left: auto;
		color: #fff;
	}

	.tray-up {
		width: 8px;
		height: 4px;
		margin-right: 4px;
	}

	.clock {
		justify-content: center;
		width: 70px;
		line-height: 17px;
		text-align: center;
	}

	.show-desktop {
		align-self: stretch;
		width: 15px;
		margin-left: -8px;
		border: 1px solid #52677e;
		background: linear-gradient(135deg, #a8b6c4, #58697d 50%, #8495a7);
	}
</style>
